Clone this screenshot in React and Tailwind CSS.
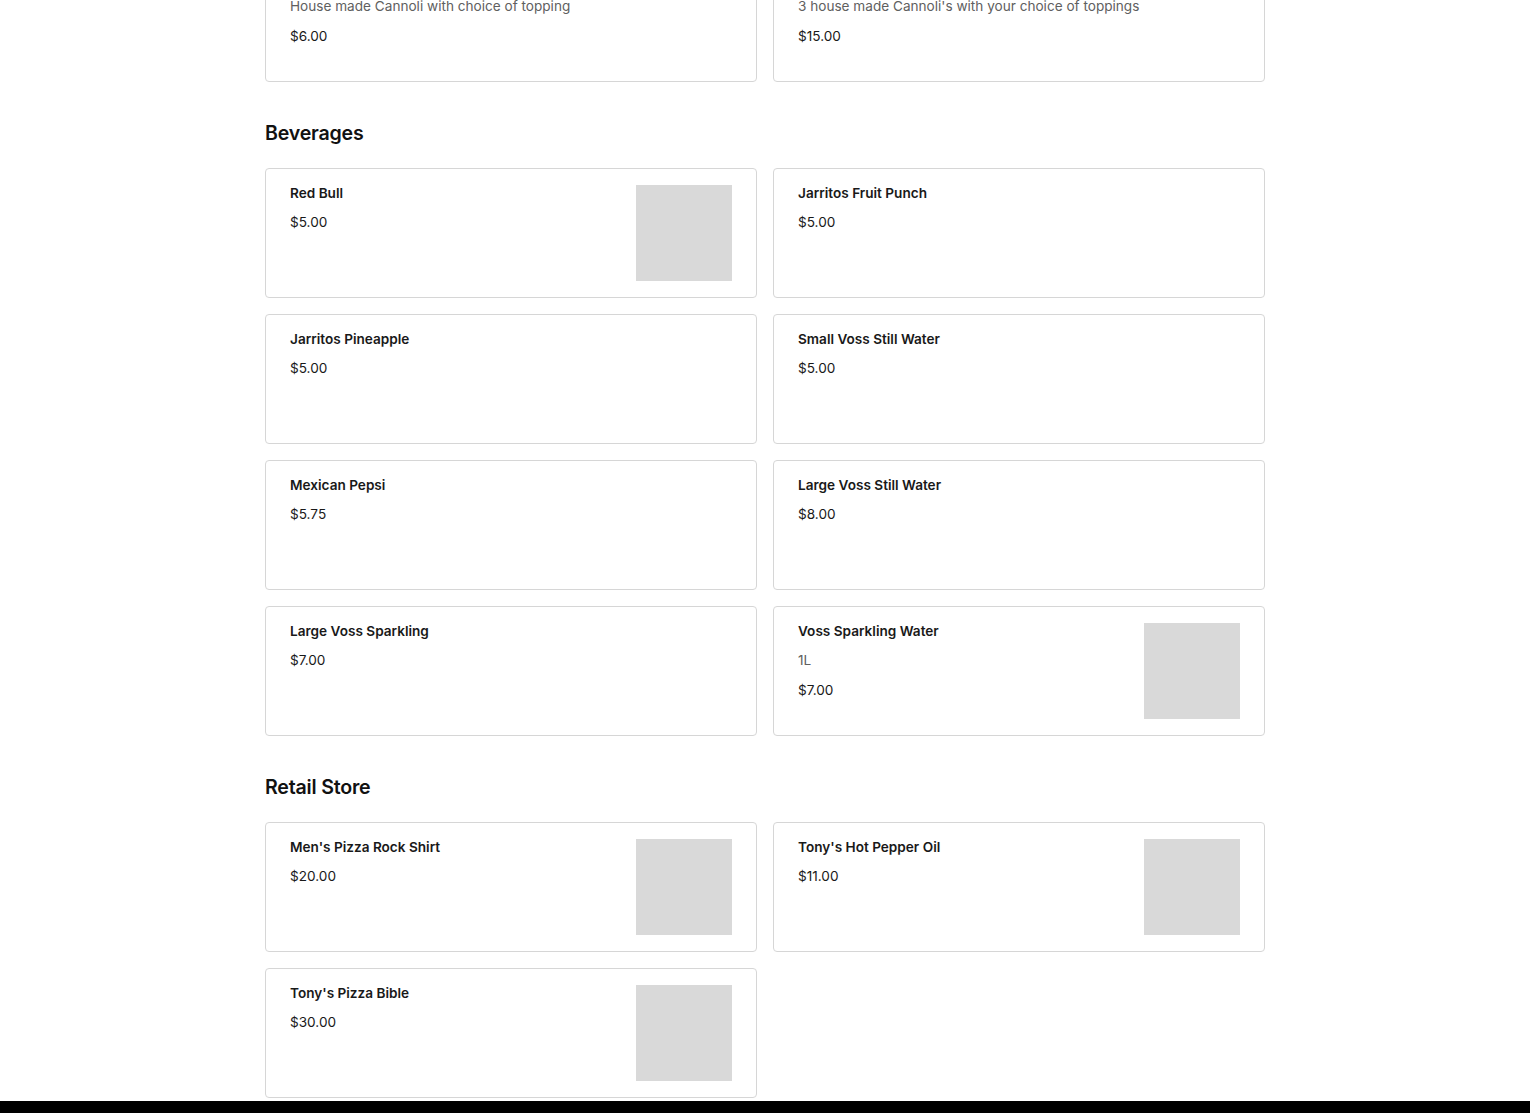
const font = { fontFamily: "Inter, 'Noto Sans', sans-serif" };

const sections = [
  {
    title: "Desserts",
    hidden: true,
    items: [
      { name: "Cannoli", desc: "House made Cannoli with choice of topping", price: "$6.00" },
      { name: "3 Cannoli", desc: "3 house made Cannoli's with your choice of toppings", price: "$15.00" },
    ],
  },
  {
    title: "Beverages",
    items: [
      { name: "Red Bull", price: "$5.00", img: true },
      { name: "Jarritos Fruit Punch", price: "$5.00" },
      { name: "Jarritos Pineapple", price: "$5.00" },
      { name: "Small Voss Still Water", price: "$5.00" },
      { name: "Mexican Pepsi", price: "$5.75" },
      { name: "Large Voss Still Water", price: "$8.00" },
      { name: "Large Voss Sparkling", price: "$7.00" },
      { name: "Voss Sparkling Water", desc: "1L", price: "$7.00", img: true },
    ],
  },
  {
    title: "Retail Store",
    items: [
      { name: "Men's Pizza Rock Shirt", price: "$20.00", img: true },
      { name: "Tony's Hot Pepper Oil", price: "$11.00", img: true },
      { name: "Tony's Pizza Bible", price: "$30.00", img: true },
    ],
  },
];

function ItemCard({ item }) {
  return (
    <div className="flex h-[130px] items-start rounded-[4px] border border-[#d6d6d6] bg-white px-6">
      <div className="flex min-w-0 flex-1 flex-col gap-[9.5px] pt-[13.5px]">
        <div className="text-[13.6px] font-semibold leading-5 text-[#191919]">{item.name}</div>
        {item.desc && (
          <div className="truncate text-[13.6px] leading-5 text-[#606060]">{item.desc}</div>
        )}
        <div className="text-[13.6px] leading-5 text-[#191919]">{item.price}</div>
      </div>
      {item.img && <div className="mt-4 h-24 w-24 shrink-0 bg-[#d9d9d9]" />}
    </div>
  );
}

export default function App() {
  return (
    <div className="min-h-screen overflow-hidden bg-white" style={font}>
      <div className="mx-auto w-[1000px] pb-[3px]">
        {sections.map((s) => (
          <section key={s.title} className={s.hidden ? "-mt-[48px]" : "mt-[37px]"}>
            {!s.hidden && (
              <h2 className="mb-[21px] text-[19.6px] font-semibold leading-7 tracking-[-0.2px] text-[#111111]">
                {s.title}
              </h2>
            )}
            <div className="grid grid-cols-2 gap-4">
              {s.items.map((item) => (
                <ItemCard key={item.name} item={item} />
              ))}
            </div>
          </section>
        ))}
      </div>
      <footer className="h-[200px] bg-black" />
    </div>
  );
}
